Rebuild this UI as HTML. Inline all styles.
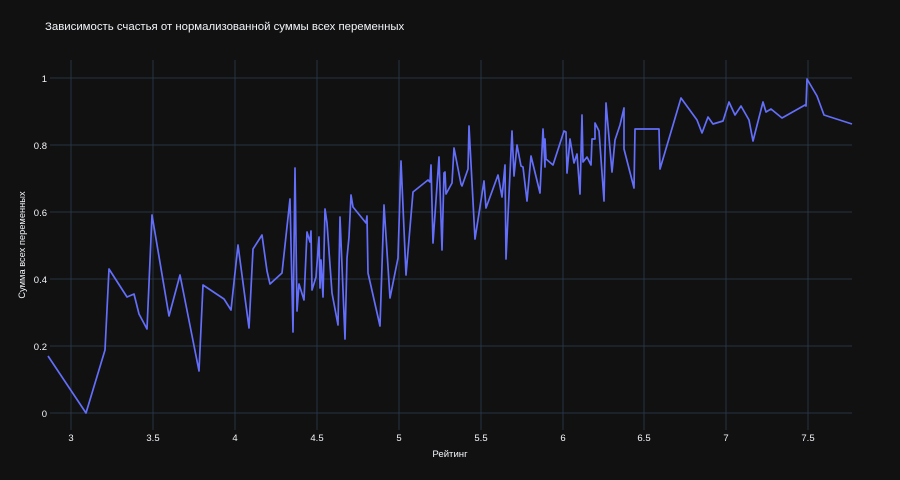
<!DOCTYPE html>
<html><head><meta charset="utf-8"><style>
html,body{margin:0;padding:0;background:#111111;width:900px;height:480px;overflow:hidden}
svg{display:block}
text{font-family:"Liberation Sans","DejaVu Sans",sans-serif;fill:#f2f5fa}
</style></head><body>
<svg width="900" height="480" viewBox="0 0 900 480" xmlns="http://www.w3.org/2000/svg">
<rect width="900" height="480" fill="#111111"/>
<g stroke="#283442" stroke-width="1">
<line x1="71" y1="60" x2="71" y2="430"/><line x1="153" y1="60" x2="153" y2="430"/>
<line x1="235" y1="60" x2="235" y2="430"/><line x1="317" y1="60" x2="317" y2="430"/>
<line x1="399" y1="60" x2="399" y2="430"/><line x1="481" y1="60" x2="481" y2="430"/>
<line x1="563" y1="60" x2="563" y2="430"/><line x1="644" y1="60" x2="644" y2="430"/>
<line x1="726" y1="60" x2="726" y2="430"/><line x1="808" y1="60" x2="808" y2="430"/>
<line x1="50" y1="78" x2="852" y2="78"/><line x1="50" y1="145" x2="852" y2="145"/>
<line x1="50" y1="212" x2="852" y2="212"/><line x1="50" y1="279" x2="852" y2="279"/>
<line x1="50" y1="346" x2="852" y2="346"/><line x1="50" y1="413" x2="852" y2="413"/>
</g>
<polyline fill="none" stroke="#636efa" stroke-width="1.7" stroke-linejoin="round" points="48,356 86,413 105,350 109,269 127,297 134,294 139,314 147,329 152,215 169,316 180,275 199,371 203,285 224,299 231,310 238,245 249,328 253,249 262,235 267,271 270,284 282,273 290,199 293,332 295,168 297,311 299,284 304,300 307,232 310,242 311,231 312,290 316,277 319,237 320,288 321,260 323,297 325,209 327,223 332,293 338,325 340,217 345,339 347,258 349,237 351,195 353,207 366,223 367,216 368,273 380,326 384,205 390,298 398,258 401,161 406,275 413,192 428,180 430,182 431,165 433,243 439,157 442,250 444,173 445,172 446,194 452,183 454,148 461,184 462,186 468,169 469,126 475,239 484,181 486,208 498,175 502,197 505,165 506,259 510,173 512,131 514,176 517,145 521,166 523,167 527,201 531,156 540,193 543,129 545,167 545,139 546,159 553,165 564,131 566,132 567,173 570,139 574,163 577,154 580,194 582,115 583,162 587,157 591,165 592,139 595,139 595,123 599,131 604,201 606,103 612,172 615,140 620,125 624,108 624,149 634,188 635,129 659,129 660,169 681,98 697,120 702,133 708,117 713,124 723,121 729,102 735,115 741,106 749,120 753,141 763,102 766,112 771,109 782,118 805,105 806,106 807,79 817,96 824,115 852,124"/>
<text x="45" y="30" font-size="11.4">Зависимость счастья от нормализованной суммы всех переменных</text>
<g font-size="9.5" text-anchor="end">
<text x="47" y="82">1</text><text x="47" y="149">0.8</text><text x="47" y="216">0.6</text>
<text x="47" y="283">0.4</text><text x="47" y="350">0.2</text><text x="47" y="417">0</text>
</g>
<g font-size="9.5" text-anchor="middle">
<text x="71" y="441">3</text><text x="153" y="441">3.5</text><text x="235" y="441">4</text>
<text x="317" y="441">4.5</text><text x="399" y="441">5</text><text x="481" y="441">5.5</text>
<text x="563" y="441">6</text><text x="644" y="441">6.5</text><text x="726" y="441">7</text>
<text x="808" y="441">7.5</text>
</g>
<text x="450" y="457" font-size="9.6" text-anchor="middle">Рейтинг</text>
<text transform="translate(25,245) rotate(-90)" font-size="9.3" text-anchor="middle">Сумма всех переменных</text>
</svg>
</body></html>
